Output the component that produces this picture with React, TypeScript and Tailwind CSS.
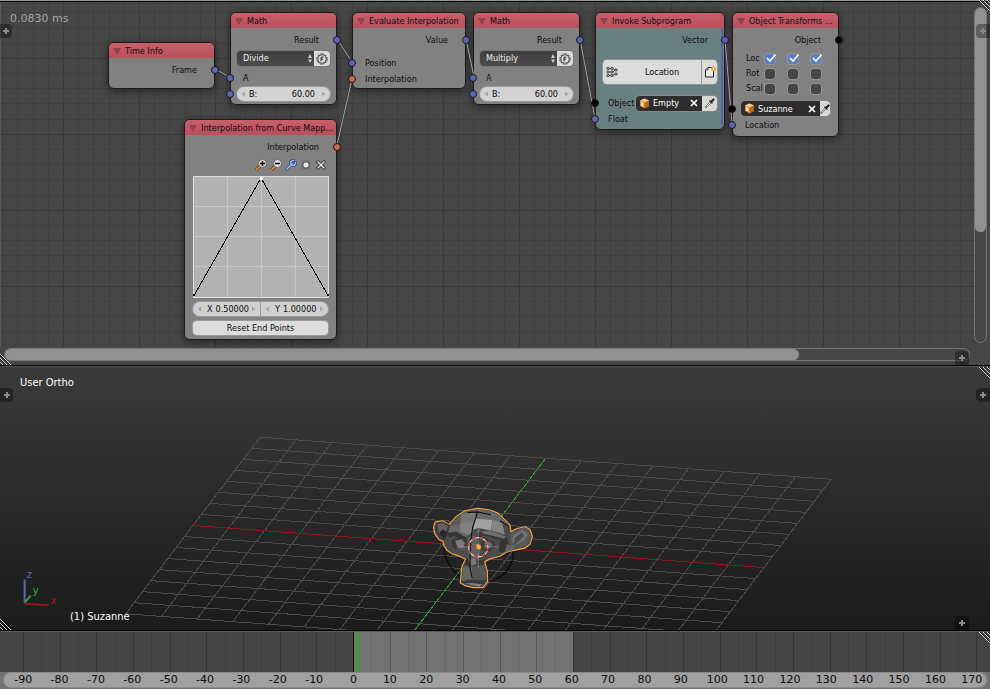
import React, { useId, useState } from "react";

const BLUE = "bg-[#6065b0]";
const ORANGE = "bg-[#c96c4c]";
const BLACK = "bg-black";

function Socket({ side, color }: { side: "left" | "right"; color: string }) {
  return (
    <span
      className={`absolute top-1 z-10 size-2 rounded-full border border-[#15151f] ${color} ${
        side === "left" ? "-left-[5px]" : "-right-[5px]"
      }`}
    />
  );
}

function Input({ label, color }: { label: string; color: string }) {
  return (
    <div className="relative flex h-4 items-center pl-3">
      <Socket side="left" color={color} />
      {label}
    </div>
  );
}

function Output({ label, color }: { label: string; color: string }) {
  return (
    <div className="relative mt-1 flex h-4 items-center justify-end pr-[17px]">
      {label}
      <Socket side="right" color={color} />
    </div>
  );
}

function Node({
  title,
  className,
  body = "bg-[#838383]/97",
  children,
}: {
  title: string;
  className: string;
  body?: string;
  children: React.ReactNode;
}) {
  return (
    <section
      className={`absolute rounded-[6px] border border-[#1b1b1b] shadow-[0_2px_7px_1px_rgba(0,0,0,0.4)] ${body} ${className}`}
    >
      <h2 className="flex h-[15px] items-center overflow-hidden rounded-t-[5px] bg-linear-to-b from-[#c8606b] to-[#b94f5a] pt-px pl-1 font-normal whitespace-nowrap">
        <svg className="mr-1 size-2 shrink-0" viewBox="0 0 8 8">
          <path d="M0 1H8L4 8Z" fill="#91424a" />
        </svg>
        {title}
      </h2>
      {children}
    </section>
  );
}

function GearIcon() {
  return (
    <svg className="size-3" viewBox="0 0 12 12" fill="none" stroke="#2a2a2a">
      <circle cx="6" cy="6" r="5.2" strokeWidth="1" strokeDasharray="1.6 1.1" />
      <circle cx="6" cy="6" r="4.1" strokeWidth=".8" />
      <path d="M5 8.2V4.2h2.500M5 6.200h2" strokeWidth="1" />
    </svg>
  );
}

function Arrow({ dir }: { dir: "left" | "right" }) {
  return (
    <svg className="h-1.5 w-1 shrink-0" viewBox="0 0 4 6" fill="#a4a4a4">
      <path d={dir === "left" ? "M4 0.500V5.500L0.500 3Z" : "M0 0.500V5.500L3.500 3Z"} />
    </svg>
  );
}

function MathNode({ className, operation }: { className: string; operation: string }) {
  const id = useId();
  return (
    <Node title="Math" className={className}>
      <Output label="Result" color={BLUE} />
      <div className="mx-1.5 mt-[3px] flex h-[15px] overflow-hidden rounded-[4px] ring-1 ring-[#777]">
        <div className="relative flex-1 bg-linear-to-b from-[#3e3e3e] to-[#4c4c4c]">
          <select
            aria-label="Operation"
            defaultValue={operation}
            className="block h-full w-full appearance-none px-1.5 text-[9px] text-[#eee] outline-none"
          >
            <option>Add</option>
            <option>Multiply</option>
            <option>Divide</option>
          </select>
          <svg className="pointer-events-none absolute top-[3px] right-0.5 h-[9px] w-1" viewBox="0 0 4 9" fill="#ccc">
            <path d="M0 4H4L2 0ZM0 5.5H4L2 9Z" />
          </svg>
        </div>
        <button aria-label="Operation settings" className="flex w-4 items-center justify-center bg-[#dcdcdc]">
          <GearIcon />
        </button>
      </div>
      <div className="mt-1">
        <Input label="A" color={BLUE} />
      </div>
      <div className="relative pt-px pb-[3px]">
        <Socket side="left" color={BLUE} />
        <div className="mx-1.5 flex h-[14px] items-center rounded-full bg-[#d3d3d3] px-1 ring-1 ring-[#999]">
          <Arrow dir="left" />
          <label htmlFor={id} className="ml-1">
            B:
          </label>
          <input id={id} defaultValue="60.00" className="mr-[7px] w-0 flex-1 text-right outline-none" />
          <Arrow dir="right" />
        </div>
      </div>
    </Node>
  );
}

function CubeIcon() {
  return (
    <svg className="size-[11px] shrink-0" viewBox="0 0 11 11">
      <path d="M5.5 0.5L10 2.5V8L5.5 10.5L1 8V2.5Z" fill="#e08a2c" />
      <path d="M5.5 0.5L10 2.5L5.5 4.5L1 2.5Z" fill="#f7c98c" />
      <path d="M5.5 4.5L10 2.5V8L5.5 10.5Z" fill="#b9651a" />
      <path d="M2 3.8L4.6 5V8.7L2 7.4Z" fill="#ffe6c4" />
    </svg>
  );
}

function CrossIcon() {
  return (
    <svg className="size-2" viewBox="0 0 8 8" stroke="#fff" strokeWidth="1.7">
      <path d="M1 1L7 7M7 1L1 7" />
    </svg>
  );
}

function DropperIcon() {
  return (
    <svg className="h-3 w-3 shrink-0" viewBox="0 0 12 12">
      <path d="M1.500 10.500L2.500 8.500L6.500 4.500L7.500 5.500L3.500 9.500Z" fill="#fff" stroke="#444" strokeWidth=".8" />
      <path d="M6 4L8 6" stroke="#222" strokeWidth="1.500" strokeLinecap="round" />
      <path d="M7.500 4.500L9.500 2.500" stroke="#222" strokeWidth="2.200" strokeLinecap="round" />
    </svg>
  );
}

function ObjectField({ value, className, dropper }: { value: string; className: string; dropper: string }) {
  return (
    <div className={`flex h-[15px] overflow-hidden rounded-[4px] ring-1 ring-[#888] ${className}`}>
      <div className="flex flex-1 items-center bg-[#2d2d2d] pr-1 pl-[3px]">
        <CubeIcon />
        <input aria-label="Object" defaultValue={value} className="ml-[3px] w-0 flex-1 text-white outline-none" />
        <button aria-label="Clear object">
          <CrossIcon />
        </button>
      </div>
      <button
        aria-label="Pick object"
        className={`flex items-center justify-center overflow-hidden bg-[#d8d8d8] ${dropper}`}
      >
        <DropperIcon />
      </button>
    </div>
  );
}

function AxisChecks({ label, checked }: { label: string; checked: boolean }) {
  return (
    <div role="group" aria-label={label} className="flex h-[15px] items-center pl-[13px]">
      <span className="w-[19px]">{label}</span>
      {["X", "Y", "Z"].map((axis) => (
        <label key={axis} className="relative mr-[13px] size-2.5">
          <input
            type="checkbox"
            aria-label={`${label} ${axis}`}
            defaultChecked={checked}
            className="peer block size-2.5 appearance-none rounded-[3px] bg-[#454545] ring-1 ring-[#949494] checked:bg-[#5680c2]"
          />
          <svg
            className="pointer-events-none absolute -top-px left-0 hidden size-3 peer-checked:block"
            viewBox="0 0 12 12"
            fill="none"
            stroke="#fff"
            strokeWidth="1.6"
          >
            <path d="M2 5L5 8L10.500 1.500" />
          </svg>
        </label>
      ))}
    </div>
  );
}

function Magnifier({ plus }: { plus: boolean }) {
  return (
    <svg className="size-3" viewBox="0 0 12 12">
      <path d="M1 11L5 7.500" stroke="#6a3d10" strokeWidth="3" strokeLinecap="round" />
      <path d="M1 11L4.500 8" stroke="#f0963a" strokeWidth="1.600" strokeLinecap="round" />
      <circle cx="7.500" cy="4.500" r="4" fill="#ddd" stroke="#555" strokeWidth=".8" />
      <path d={plus ? "M5 4.500H10M7.500 2V7" : "M5 4.500H10"} stroke="#000" strokeWidth="1.500" />
    </svg>
  );
}

function CurveTools() {
  return (
    <div className="mt-[3px] flex h-[14px] items-center justify-end gap-[3px] pr-[9px]">
      <button aria-label="Zoom in">
        <Magnifier plus />
      </button>
      <button aria-label="Zoom out">
        <Magnifier plus={false} />
      </button>
      <button aria-label="Tools">
        <svg className="size-3" viewBox="0 0 12 12" fill="none" strokeLinecap="round">
          <path d="M2 10L7 5M10.500 3.500A2.500 2.500 0 1 1 8.500 1.500" stroke="#29477c" strokeWidth="3" />
          <path d="M2 10L7 5M10.500 3.500A2.500 2.500 0 1 1 8.500 1.500" stroke="#a4c4f4" strokeWidth="1.500" />
        </svg>
      </button>
      <button aria-label="Clipping">
        <svg className="size-3" viewBox="0 0 12 12">
          <rect x="1" y="1" width="10" height="10" fill="#777" />
          <circle cx="6" cy="6" r="3.200" fill="#eee" stroke="#222" strokeWidth=".8" />
        </svg>
      </button>
      <button aria-label="Delete point">
        <svg className="size-3" viewBox="0 0 12 12" fill="none" strokeLinecap="square">
          <path d="M3 3L9 9M9 3L3 9" stroke="#222" strokeWidth="3" />
          <path d="M3 3L9 9M9 3L3 9" stroke="#eee" strokeWidth="1.400" />
        </svg>
      </button>
    </div>
  );
}

function CurveNode() {
  return (
    <Node title="Interpolation from Curve Mapp..." className="top-[119px] left-[184px] w-[153px]">
      <Output label="Interpolation" color={ORANGE} />
      <CurveTools />
      <svg className="mx-2 mt-1 block h-[122px] w-[136px]" viewBox="0 0 136 122" shapeRendering="crispEdges">
        <rect width="136" height="122" fill="#b2b2b2" />
        <path d="M34.500 0V122M68.500 0V122M102.500 0V122M0 30.500H136M0 60.500H136M0 90.500H136" stroke="#c6c6c6" />
        <rect x=".5" y=".5" width="135" height="121" fill="none" stroke="#dedede" />
        <path d="M1 119.500L68 2L135 119.500" fill="none" stroke="#000" />
        <rect x="67" y="1" width="3" height="3" fill="#fff" />
        <path d="M0 118h2v2H0zM134 118h2v2h-2z" fill="#000" />
      </svg>
      <div className="mx-2 mt-1 flex h-[14px] gap-px overflow-hidden rounded-full bg-[#999] ring-1 ring-[#999]">
        {[
          ["X", "0.50000"],
          ["Y", "1.00000"],
        ].map(([axis, value]) => (
          <label key={axis} className="flex flex-1 items-center bg-[#d0d0d0] px-1">
            <Arrow dir="left" />
            <span className="ml-1.5 flex flex-1 items-center">
              {axis}
              <input defaultValue={value} className="ml-[3px] w-0 flex-1 outline-none" />
            </span>
            <Arrow dir="right" />
          </label>
        ))}
      </div>
      <div className="mx-2 mt-[5px] mb-1 flex">
        <button className="h-[14px] flex-1 rounded-[4px] bg-[#dcdcdc] ring-1 ring-[#999]">Reset End Points</button>
      </div>
    </Node>
  );
}

function InvokeNode() {
  return (
    <Node title="Invoke Subprogram" className="top-3 left-[595px] w-[130px]" body="bg-[#6a8283]/97">
      <div className="absolute top-[15px] right-px bottom-1 w-0.5 bg-[#5a60b0]" />
      <div className="relative mt-1 flex h-4 items-center justify-end pr-4">
        Vector
        <Socket side="right" color={BLUE} />
      </div>
      <div className="mx-[7px] mt-3 flex h-6 gap-px overflow-hidden rounded-[4px] bg-[#999] ring-1 ring-[#8d9a9a]">
        <button className="relative flex-1 bg-[#dbdbdb] pl-5">
          <svg className="absolute top-1.5 left-[3px] size-3" viewBox="0 0 12 12" fill="#ccc" stroke="#222" strokeWidth=".7">
            <path d="M1 1.500h2v2H1zM1 5h2v2H1zM1 8.500h2v2H1zM5 1.500h2v2H5zM5 5h2v2H5zM5 8.500h2v2H5zM9 3h2v2H9zM9 7h2v2H9z" />
            <path d="M3 2.500H5M3 6H5M3 9.500H5M7 2.500L9 4M7 6L9 4M7 9.500L9 8" fill="none" />
          </svg>
          Location
        </button>
        <button aria-label="New subprogram" className="flex w-[15px] items-center justify-center bg-[#dbdbdb]">
          <svg className="size-3" viewBox="0 0 12 12">
            <path d="M4 1.500H9.500V11H1.500V4Z" fill="#eee" stroke="#222" />
            <path d="M4 1.500V4H1.500" fill="#aaa" stroke="#222" strokeWidth=".8" />
            <circle cx="9.500" cy="3" r="2.500" fill="#f3a33a" />
            <path d="M9.500 1.500V4" stroke="#fff" />
          </svg>
        </button>
      </div>
      <div className="relative mt-[11px] flex h-4 items-center pl-3">
        <Socket side="left" color={BLACK} />
        <span className="w-7">Object</span>
        <ObjectField value="Empty" className="mr-[7px] flex-1" dropper="w-[15px]" />
      </div>
      <div className="pb-0.5">
        <Input label="Float" color={BLUE} />
      </div>
    </Node>
  );
}

function TransformsNode() {
  return (
    <Node title="Object Transforms ..." className="top-3 left-[732px] w-[107px]">
      <Output label="Object" color={BLACK} />
      <div className="mt-[3px]">
        <AxisChecks label="Loc" checked />
        <AxisChecks label="Rot" checked={false} />
        <AxisChecks label="Scal" checked={false} />
      </div>
      <div className="relative mt-[5px]">
        <Socket side="left" color={BLACK} />
        <ObjectField value="Suzanne" className="mx-2" dropper="w-2.5" />
      </div>
      <div className="pt-px pb-[3px]">
        <Input label="Location" color={BLUE} />
      </div>
    </Node>
  );
}

function RegionTab({ className }: { className: string }) {
  return (
    <button
      aria-label="Open region"
      className={`absolute z-20 flex h-[14px] items-center justify-center bg-black/35 ${className}`}
    >
      <svg className="size-1.5" viewBox="0 0 6 6" stroke="#8c8c8c" strokeWidth="2">
        <path d="M3 0V6M0 3H6" />
      </svg>
    </button>
  );
}

function Grip({ corner }: { corner: "top-right" | "bottom-left" }) {
  const top = corner === "top-right";
  return (
    <svg
      className={`pointer-events-none absolute z-20 h-[11px] w-3 ${top ? "top-0 right-0" : "bottom-0 left-0"}`}
      viewBox="0 0 12 11"
      shapeRendering="crispEdges"
    >
      <path d={top ? "M2 0L13 11M6 0L13 7M10 0L13 3" : "M0 1L10 11M0 5L6 11M0 9L2 11"} stroke="#111" />
      <path d={top ? "M1 0L12 11M5 0L12 7M9 0L12 3" : "M0 0L11 11M0 4L7 11M0 8L3 11"} stroke="#ddd" />
    </svg>
  );
}

const columns = Array.from({ length: 200 }, (_, i) => i);

function CanvasGrid() {
  return (
    <svg className="absolute inset-0 h-full w-full" shapeRendering="crispEdges">
      {columns.map((i) => (
        <line
          key={`v${i}`}
          x1={1.7 + i * 15.2}
          x2={1.7 + i * 15.2}
          y1="0"
          y2="100%"
          stroke={i % 5 === 4 ? "#393939" : "#3f3f3f"}
        />
      ))}
      {columns.map((i) => (
        <line
          key={`h${i}`}
          x1="0"
          x2="100%"
          y1={10.7 + i * 15.2}
          y2={10.7 + i * 15.2}
          stroke={i % 5 === 3 ? "#393939" : "#3f3f3f"}
        />
      ))}
    </svg>
  );
}

function Links() {
  const path =
    "M215 69L230 77M337 39L352 62M337 145L352 79M466 39L474 77M580 39L595 119M725 39L732 124";
  return (
    <svg className="absolute inset-0 h-full w-full" fill="none">
      <path d={path} stroke="#333" strokeWidth="2" />
      <path d={path} stroke="#a5a5a5" />
    </svg>
  );
}

function NodeEditor() {
  return (
    <main className="relative grid min-h-0 flex-[367] grid-cols-[minmax(0,1fr)_16px] grid-rows-[2px_minmax(0,1fr)_18px] overflow-hidden border-b border-black bg-[#464646]">
      <div className="col-span-2 border-b border-black bg-[#8f958f]" />
      <div className="relative border-l border-[#5a5a5a]">
        <CanvasGrid />
        <div className="absolute -top-0.5 -left-px h-full w-full text-[9px] leading-none text-[#0c0c0c]">
          <Node title="Time Info" className="top-[42px] left-[108px] w-[107px]">
            <Output label="Frame" color={BLUE} />
            <div className="h-2.5" />
          </Node>
          <MathNode className="top-3 left-[230px] w-[107px]" operation="Divide" />
          <Node title="Evaluate Interpolation" className="top-3 left-[352px] w-[114px]">
            <Output label="Value" color={BLUE} />
            <div className="pt-[7px] pb-px">
              <Input label="Position" color={BLUE} />
              <Input label="Interpolation" color={ORANGE} />
            </div>
          </Node>
          <MathNode className="top-3 left-[473px] w-[107px]" operation="Multiply" />
          <CurveNode />
          <InvokeNode />
          <TransformsNode />
          <div className="pointer-events-none absolute inset-0">
            <Links />
          </div>
        </div>
        <p className="absolute top-[10px] left-[9px] font-['DejaVu_Sans',sans-serif] text-[11px] leading-[14px] text-[#a6a6a6]">
          0.0830 ms
        </p>
      </div>
      <div className="mt-[5px] mr-[3px] mb-1 rounded-full border border-[#777]">
        <div className="h-[67%] rounded-full bg-[#919191]" />
      </div>
      <div className="mt-px mr-1 mb-1 ml-1 rounded-full border border-[#777]">
        <div className="h-full w-[82.400%] rounded-full bg-[#919191]" />
      </div>
      <RegionTab className="top-6 left-0 w-3 rounded-r-[4px]" />
      <RegionTab className="top-6 right-0 w-[14px] rounded-l-[4px]" />
      <RegionTab className="right-[21px] bottom-0 w-[14px] rounded-t-[4px]" />
      <Grip corner="top-right" />
      <Grip corner="bottom-left" />
    </main>
  );
}

const cells = Array.from({ length: 17 }, (_, i) => i - 8);

function Suzanne() {
  return (
    <g transform="translate(400 490) scale(.3333)" strokeLinejoin="round">
      <path d="M133 165C130 225 175 265 210 275M335 165C350 215 320 265 268 274" fill="none" stroke="#050505" strokeWidth="3" />
      <path
        d="M148 105L128 94L106 98L101 113L105 133L117 150L130 157L132 169L141 182L157 193L176 199L197 209L186 231L181 280L195 288L221 294L249 294L263 277L262 244L254 217L270 208L300 200L321 187L345 182L374 176L390 164L397 141L390 121L376 112L350 117L333 127L330 107L316 92L294 71L268 61L232 57L195 64L169 81Z"
        fill="#4c4c4c"
        stroke="#f3a23c"
        strokeWidth="3.500"
      />
      <path d="M148 105L128 96L109 101L105 121L121 148L133 153L147 132Z" fill="#3d3d3d" />
      <path d="M112 105L128 101L144 111L140 126L128 119L119 132Z" fill="#626262" />
      <path d="M119 132L126 121L142 127L136 150Z" fill="#292929" />
      <path d="M332 130L370 114L388 125L392 145L381 166L348 176L330 170Z" fill="#595959" />
      <path d="M340 137L365 121L384 132L374 151L352 164L337 158Z" fill="#737373" />
      <path d="M344 146L365 130L372 139L356 157L342 165Z" fill="#494949" />
      <path d="M169 83L195 67L232 60L222 89L183 103L153 110Z" fill="#5b5b5b" />
      <path d="M184 74L229 67L221 113L180 125Z" fill="#777" />
      <path d="M232 60L268 65L294 75L317 96L329 116L309 103L278 91L226 88Z" fill="#686868" />
      <path d="M228 88L278 91L273 123L235 116L219 121Z" fill="#a2a2a2" />
      <path d="M278 91L306 101L319 137L274 123Z" fill="#858585" />
      <path d="M307 101L328 114L324 145L315 138Z" fill="#4b4b4b" />
      <path d="M152 110L181 104L179 128L206 140L151 139L145 126Z" fill="#696969" />
      <path d="M181 104L221 96L216 130L205 138L179 127Z" fill="#828282" />
      <path d="M145 130L168 127L204 147L184 149L162 139L148 145Z" fill="#333" />
      <path d="M226 139L250 120L282 132L316 138L306 153L280 147L251 138L232 153Z" fill="#3a3a3a" />
      <path d="M242 125L271 124L318 142L311 147L252 133Z" fill="#707070" />
      <path d="M158 150L180 143L200 151L201 176L187 188L165 179L154 165Z" fill="#3a3a3a" />
      <path d="M166 154L186 149L195 161L190 176L173 175Z" fill="#7b7b7b" />
      <path d="M166 171L187 177L202 167L200 182L182 187Z" fill="#555" />
      <path d="M243 158L260 148L284 158L286 174L265 187L245 181Z" fill="#3a3a3a" />
      <path d="M253 159L267 155L278 164L269 177L254 176Z" fill="#6b6b6b" />
      <path d="M206 142L225 138L239 158L240 203L221 214L205 194Z" fill="#606060" />
      <path d="M302 155L320 144L328 166L312 189L295 185Z" fill="#343434" />
      <path d="M320 164L346 172L337 183L315 188Z" fill="#636363" />
      <path d="M200 207L230 214L256 208L248 229L211 232L193 223Z" fill="#383838" />
      <path d="M205 207L226 208L231 223L214 229Z" fill="#777" />
      <path d="M190 231L217 231L220 279L186 274Z" fill="#656565" />
      <path d="M217 231L252 226L258 269L246 281L220 278Z" fill="#565656" />
      <path d="M184 276L207 270L257 272L247 290L204 286Z" fill="#3a3a3a" />
      <path d="M194 282L216 280L249 285L237 291Z" fill="#818181" />
      <path
        d="M233 67L226 89L218 114L213 149L211 189L210 235L217 266M203 69L234 68L273 76M300 94L326 111"
        fill="none"
        stroke="#080808"
        strokeWidth="3"
      />
      <path d="M176 172H213M259 172H295M235 190V234M235 115V150" stroke="#999" strokeWidth="2" />
      <circle cx="235" cy="173" r="29" fill="none" stroke="#eee" strokeWidth="3" />
      <circle cx="235" cy="173" r="29" fill="none" stroke="#f11a1a" strokeWidth="3" strokeDasharray="13 10" />
      <path d="M228 166L235 163L243 168L244 176L237 181L229 178Z" fill="#ffac3b" stroke="#7a4815" />
    </g>
  );
}

function Viewport() {
  return (
    <section className="relative min-h-0 flex-[264] overflow-hidden border-t border-b border-t-[#505050] border-b-black bg-linear-to-b from-[#3b3b3b] to-[#1b1b1b]">
      <svg className="absolute inset-0 h-full w-full" viewBox="0 368 990 262" preserveAspectRatio="xMidYMid slice">
        <g stroke="#4c4c4c" shapeRendering="crispEdges">
          {cells.map((i) => (
            <React.Fragment key={i}>
              <line
                x1={478.5 + i * 35.6 + 67}
                y1={547 + i * 2.6 - 88}
                x2={478.5 + i * 35.6 - 67}
                y2={547 + i * 2.6 + 88}
                stroke={i === 0 ? "#2f9e2f" : undefined}
              />
              <line
                x1={478.5 - 285 + i * 8.4}
                y1={547 - 21 - i * 11}
                x2={478.5 + 285 + i * 8.4}
                y2={547 + 21 - i * 11}
                stroke={i === 0 ? "#8e1818" : undefined}
              />
            </React.Fragment>
          ))}
        </g>
        <Suzanne />
        <g fill="none" strokeWidth="2">
          <path d="M26 603V580" stroke="#6065b0" />
          <path d="M26 603L32 596" stroke="#2fa52f" />
          <path d="M26 604L50 605.500" stroke="#8e1818" />
        </g>
        <g className="font-['DejaVu_Sans',sans-serif] text-[10px]">
          <text x="28" y="578" fill="#6065b0">z</text>
          <text x="34" y="594" fill="#35b52f">y</text>
          <text x="52" y="604" fill="#a32020">x</text>
        </g>
      </svg>
      <p className="absolute top-[9px] left-5 text-[11px] leading-[14px] text-white">User Ortho</p>
      <p className="absolute bottom-[6px] left-[70px] text-[11px] leading-[14px] text-white">(1) Suzanne</p>
      <RegionTab className="top-[21px] left-0 w-[13px] rounded-r-[4px]" />
      <RegionTab className="top-[21px] right-0 w-[14px] rounded-l-[4px]" />
      <RegionTab className="right-[21px] bottom-0 w-[14px] rounded-t-[4px]" />
      <Grip corner="top-right" />
      <Grip corner="bottom-left" />
    </section>
  );
}

const frames = Array.from({ length: 27 }, (_, i) => (i - 9) * 10);

function Timeline() {
  const [current] = useState(1);
  const x = (frame: number) => 353.5 + frame * 3.667;
  return (
    <footer className="relative flex h-[58px] shrink-0 flex-col border-t border-[#5a5a5a] bg-[#727272]">
      <svg className="block h-10 w-full" viewBox="0 0 990 40" preserveAspectRatio="none" shapeRendering="crispEdges">
        <rect width="990" height="40" fill="#444" />
        <rect x={x(0)} width={x(60) - x(0)} height="40" fill="#727272" />
        {frames.map((f) => {
          const inside = f >= 0 && f < 60;
          return (
            <g key={f}>
              <line x1={x(f)} x2={x(f)} y1="0" y2="40" stroke={f === 0 ? "#111" : inside ? "#575757" : "#343434"} />
              <line x1={x(f + 5)} x2={x(f + 5)} y1="0" y2="40" stroke={inside ? "#686868" : "#3d3d3d"} />
            </g>
          );
        })}
        <rect x={x(current) - 1} width="3" height="40" fill="#30a52a" />
      </svg>
      <div className="mt-px mr-1 ml-1 flex h-[14px] rounded-full bg-[#a0a0a0] ring-1 ring-[#8a8a8a]">
        <div className="-mr-1 ml-1 grid flex-1 grid-cols-27 font-['DejaVu_Sans',sans-serif] text-[11px] leading-[14px] text-[#0a0a0a]">
          {frames.map((f) => (
            <span key={f} className={`flex justify-center ${f < 0 ? "pr-1.5" : ""}`}>
              {f}
            </span>
          ))}
        </div>
      </div>
      <Grip corner="top-right" />
    </footer>
  );
}

export default function App() {
  return (
    <div className="flex h-screen w-full flex-col overflow-hidden bg-black font-['DejaVu_Sans_Condensed','DejaVu_Sans',sans-serif]">
      <NodeEditor />
      <Viewport />
      <Timeline />
    </div>
  );
}
